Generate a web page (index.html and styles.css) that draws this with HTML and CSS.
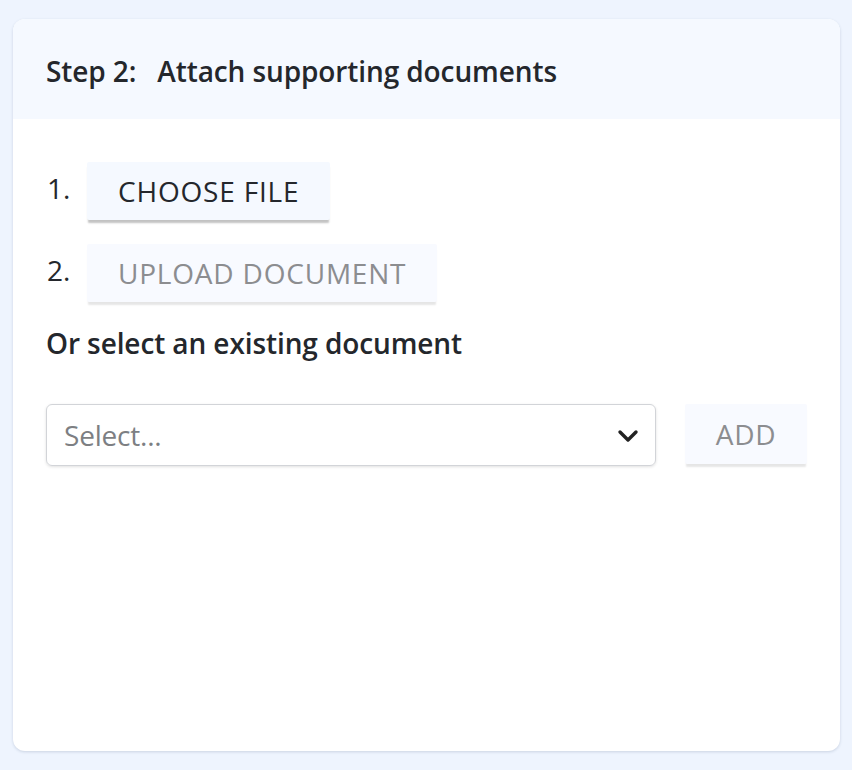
FILE: index.html
```html
<!DOCTYPE html>
<html lang="en">
  <head>
    <meta charset="UTF-8" />
    <meta name="viewport" content="width=device-width, initial-scale=1.0" />
    <title>Attach Documents</title>
    <link rel="stylesheet" href="styles.css">
  </head>
  <body>
    <div class="card">
      <div class="card-header">
        <span class="step">Step 2:</span>
        <span>Attach supporting documents</span>
      </div>
      <div class="card-body">
        <div class="step-row">
          <span class="num">1.</span>
          <button class="btn">CHOOSE FILE</button>
        </div>
        <div class="step-row">
          <span class="num">2.</span>
          <button class="btn disabled" disabled>UPLOAD DOCUMENT</button>
        </div>
        <p class="label">Or select an existing document</p>
        <div class="select-row">
          <div class="select">
            <span class="placeholder">Select...</span>
            <svg class="chevron" width="22" height="14" viewBox="0 0 22 14">
              <path d="M3 3 L11 11 L19 3" fill="none" stroke="#222" stroke-width="3.4" stroke-linecap="round" stroke-linejoin="round" />
            </svg>
          </div>
          <button class="btn disabled add-btn" disabled>ADD</button>
        </div>
      </div>
    </div>
  </body>
</html>
```

FILE: styles.css
```css
body {
  font-family: "Open Sans", Arial, sans-serif;
  margin: 0;
  padding: 19px 12px 19px 13px;
  background-color: #eef4fe;
  color: #24272c;
}

.card {
  background-color: white;
  border-radius: 12px;
  box-shadow: 0 1px 3px rgba(40, 60, 100, 0.18);
  height: 732px;
  overflow: hidden;
}

.card-header {
  background-color: #f5f9ff;
  height: 100px;
  box-sizing: border-box;
  padding: 3px 33px 0 33px;
  display: flex;
  align-items: center;
  font-size: 28px;
  font-weight: 600;
  letter-spacing: -0.1px;
}

.card-header .step {
  margin-right: 21px;
}

.card-body {
  padding: 43px 33px;
}

.step-row {
  display: flex;
  align-items: center;
  margin-bottom: 24px;
}

.num {
  width: 41px;
  font-size: 28px;
  margin-top: -6px;
  margin-left: 1px;
  margin-right: -1px;
}

.btn {
  font-family: "Open Sans", Arial, sans-serif;
  font-size: 28px;
  letter-spacing: 0.8px;
  color: #24272c;
  background-color: #f5f9ff;
  border: none;
  border-radius: 2px;
  height: 58px;
  padding: 0 31px;
  box-shadow: 0 4px 2px -1px rgba(0, 0, 0, 0.24);
}

.btn.disabled {
  color: #8c8d90;
  background-color: #f8faff;
  box-shadow: 0 4px 2px -1px rgba(0, 0, 0, 0.1);
}

.label {
  font-size: 28px;
  font-weight: 600;
  margin: -2px 0 42px;
  letter-spacing: -0.1px;
}

.select-row {
  display: flex;
  align-items: flex-start;
}

.select {
  width: 611px;
  height: 62px;
  border: 1px solid #d2d4d8;
  border-radius: 6px;
  box-shadow: 0 1px 3px rgba(0, 0, 0, 0.12);
  display: flex;
  align-items: center;
  justify-content: space-between;
  padding: 0 16px 0 17px;
  box-sizing: border-box;
}

.placeholder {
  font-size: 28px;
  color: #7d7f83;
  letter-spacing: -0.2px;
}

.chevron {
  margin-top: 2px;
}

.add-btn {
  margin-left: 29px;
  width: 122px;
  padding: 0;
  height: 60px;
}
```
